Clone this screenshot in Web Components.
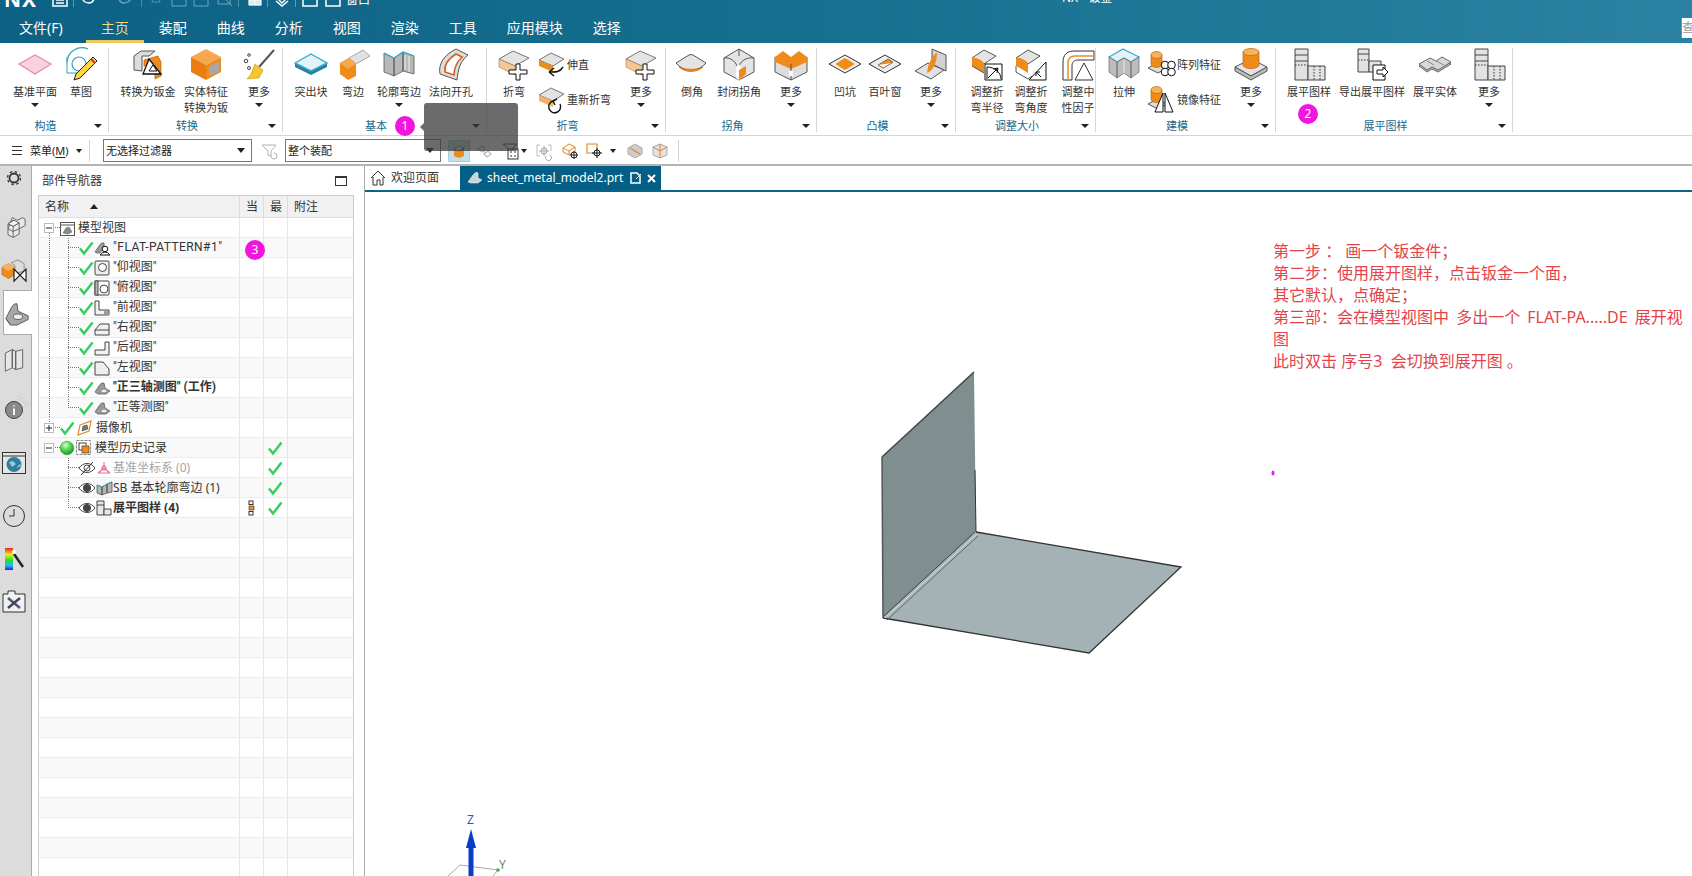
<!DOCTYPE html>
<html lang="zh"><head><meta charset="utf-8"><title>NX - 钣金</title>
<style>
html,body{margin:0;padding:0;background:#fff;overflow:hidden}
body{width:1692px;height:876px;font:12px/16px "Noto Sans","Noto Sans CJK SC",sans-serif;color:#222}
</style></head><body>
<nx-app>
  <nx-titlebar></nx-titlebar>
  <nx-ribbon>
    <rb-group w="108" label="构造">
      <rb-gap w="5"></rb-gap>
      <rb-btn icon="plane" w="60" more>基准平面</rb-btn>
      <rb-btn icon="sketch" w="32">草图</rb-btn>
    </rb-group>
    <rb-group w="173" label="转换">
      <rb-gap w="11"></rb-gap>
      <rb-btn icon="convert" w="56">转换为钣金</rb-btn>
      <rb-btn icon="solid" w="60">实体特征<br>转换为钣</rb-btn>
      <rb-btn icon="broom" w="46" more>更多</rb-btn>
    </rb-group>
    <rb-group w="203" label="基本">
      <rb-gap w="6"></rb-gap>
      <rb-btn icon="tab" w="44">突出块</rb-btn>
      <rb-btn icon="flange" w="40">弯边</rb-btn>
      <rb-btn icon="contour" w="52" more>轮廓弯边</rb-btn>
      <rb-btn icon="cutout" w="52">法向开孔</rb-btn>
    </rb-group>
    <rb-group w="178" label="折弯">
      <rb-gap w="7"></rb-gap>
      <rb-btn icon="bend" w="40">折弯</rb-btn>
      <rb-small w="87">
        <rb-item icon="unbend">伸直</rb-item>
        <rb-item icon="rebend">重新折弯</rb-item>
      </rb-small>
      <rb-btn icon="bend" w="40" more>更多</rb-btn>
    </rb-group>
    <rb-group w="150" label="拐角">
      <rb-gap w="6"></rb-gap>
      <rb-btn icon="chamfer" w="40">倒角</rb-btn>
      <rb-btn icon="closecorner" w="54">封闭拐角</rb-btn>
      <rb-btn icon="morecorner" w="50" more>更多</rb-btn>
    </rb-group>
    <rb-group w="138" label="凸模">
      <rb-gap w="10"></rb-gap>
      <rb-btn icon="dimple" w="36">凹坑</rb-btn>
      <rb-btn icon="louver" w="44">百叶窗</rb-btn>
      <rb-btn icon="gusset" w="48" more>更多</rb-btn>
    </rb-group>
    <rb-group w="139" label="调整大小">
      <rb-gap w="12"></rb-gap>
      <rb-btn icon="radius" w="38">调整折<br>弯半径</rb-btn>
      <rb-btn icon="angle" w="50">调整折<br>弯角度</rb-btn>
      <rb-btn icon="neutral" w="44">调整中<br>性因子</rb-btn>
    </rb-group>
    <rb-group w="179" label="建模">
      <rb-gap w="8"></rb-gap>
      <rb-btn icon="extrude" w="40">拉伸</rb-btn>
      <rb-small w="87">
        <rb-item icon="pattern">阵列特征</rb-item>
        <rb-item icon="mirror">镜像特征</rb-item>
      </rb-small>
      <rb-btn icon="boss" w="40" more>更多</rb-btn>
    </rb-group>
    <rb-group w="236" label="展平图样" last>
      <rb-gap w="4"></rb-gap>
      <rb-btn icon="flat" w="58">展平图样</rb-btn>
      <rb-btn icon="export" w="68">导出展平图样</rb-btn>
      <rb-btn icon="flatsolid" w="58">展平实体</rb-btn>
      <rb-btn icon="flat" w="50" more>更多</rb-btn>
    </rb-group>
  </nx-ribbon>
  <nx-toolbar></nx-toolbar>
  <nx-main>
    <nx-sidebar></nx-sidebar>
    <nx-navigator>
      <nav-row tree="minus" lead="" icon="viewwin" zero>模型视图</nav-row>
      <nav-row guide check icon="isouser"><span style="letter-spacing:.45px">"FLAT-PATTERN#1"</span></nav-row>
      <nav-row guide check icon="vbottom">"仰视图"</nav-row>
      <nav-row guide check icon="vtop">"俯视图"</nav-row>
      <nav-row guide check icon="vfront">"前视图"</nav-row>
      <nav-row guide check icon="vright">"右视图"</nav-row>
      <nav-row guide check icon="vback">"后视图"</nav-row>
      <nav-row guide check icon="vleft">"左视图"</nav-row>
      <nav-row guide check icon="iso" bold>"正三轴测图" (工作)</nav-row>
      <nav-row guide last check icon="iso">"正等测图"</nav-row>
      <nav-row tree="plus" up check icon="camera">摄像机</nav-row>
      <nav-row tree="minus" ball icon="history" best>模型历史记录</nav-row>
      <nav-row sub eyeoff icon="csys" muted best>基准坐标系 (0)</nav-row>
      <nav-row sub eye icon="contourmini" best>SB 基本轮廓弯边 (1)</nav-row>
      <nav-row sub last eye icon="flatmini" bold cur best>展平图样 (4)</nav-row>
    </nx-navigator>
    <nx-viewport>
      <nx-note>第一步 ： 画一个钣金件；<br>第二步：使用展开图样，点击钣金一个面，<br>其它默认，点确定；<br><span style="word-spacing:3px">第三部：会在模型视图中 多出一个 FLAT-PA.....DE 展开视</span><br>图<br>此时双击 序号3&nbsp; 会切换到展开图 。</nx-note>
    </nx-viewport>
  </nx-main>
  <nx-tip style="left:424px;top:103px"></nx-tip>
  <nx-badge style="left:395px;top:116px">1</nx-badge>
  <nx-badge style="left:1298px;top:104px">2</nx-badge>
  <nx-badge style="left:245px;top:240px">3</nx-badge>
</nx-app>
<script>
const S='stroke-linejoin="round"';
const cross=`<path d="M19 16h4v6h7v4h-7v6h-4v-6h-7v-4h7z" fill="#fff" stroke="#111"/>`;
const cyl=(x,y,w=14,h=12)=>`<path d="M${x} ${y}v${h}a${w/2} 3.5 0 0 0 ${w} 0v-${h}z" fill="#f08a18" stroke="#b86a10" stroke-width=".7"/><ellipse cx="${x+w/2}" cy="${y}" rx="${w/2}" ry="3.5" fill="#f9b25a" stroke="#b86a10" stroke-width=".7"/>`;
const I={
plane:`<path d="M1 16 17 7 33 16 17 26Z" fill="#fbd0e0" stroke="#e58ab0" stroke-width="1.2"/>`,
sketch:`<path d="M3 14A15 15 0 0 1 24 1" fill="none" stroke="#2aa3bb" stroke-width="1.3"/><path d="M3 9v16h18" fill="none" stroke="#2aa3bb"/><circle cx="15" cy="16" r="7" fill="none" stroke="#2aa3bb" stroke-width="1.2"/><path d="M29 9 33 13 16 30 10 32 12 26Z" fill="#ffd43c" stroke="#222"/><path d="M27 11 31 15" stroke="#c33" stroke-width="2"/>`,
convert:`<path d="M3 22V8l7-5h14l-6 5h-7v15z" fill="#dcdcdc" stroke="#555"/><path d="M13 12l14-4 3 6v14l-6 3V15l-11 3z" fill="#f28a1e" stroke="#a8600f" stroke-width=".7"/><path d="M18 11 12 26H30Z" fill="#fff" stroke="#111" stroke-width="1.3"/><path d="M22 17 18 23H26Z" fill="#fff" stroke="#111"/>`,
solid:`<path d="M17 1 32 9 17 17 2 9Z" fill="#f7a84c"/><path d="M2 9 17 17V32L2 24Z" fill="#ea7c10"/><path d="M17 17 32 9V24L17 32Z" fill="#f08a18"/><path d="M20 18.500 30 13V23L20 28.500Z" fill="#a8a8a8"/>`,
broom:`<path d="M32 2 17 19" stroke="#555" stroke-width="2"/><path d="M13 16 21 22 17 30 5 31 9 26Z" fill="#f7c52d" stroke="#c99a10" stroke-width=".6"/><circle cx="4" cy="13" r="1.800" fill="none" stroke="#444"/><circle cx="7" cy="7" r="1.300" fill="none" stroke="#444"/><circle cx="7" cy="20" r="1.500" fill="none" stroke="#444"/>`,
tab:`<path d="M1 15 17 7 33 15V19L17 27 1 19Z" fill="#2b7f9f"/><path d="M1 15 17 6 33 15 17 23Z" fill="#e6f2f7" stroke="#2fb0d0" stroke-width="1.400"/>`,
flange:`<path d="M13 10 27 2 34 8 20 16Z" fill="#e2e2e2" stroke="#888" stroke-width=".7"/><path d="M4 15 13 10 20 16V28L12 32 4 26Z" fill="#f08a18"/><path d="M13 10 20 16 12 21 4 15Z" fill="#f7a84c"/>`,
contour:`<path d="M2 5 12 10V28L2 24ZM12 10 21 4V23L12 28ZM21 4 32 8V26L21 23Z" fill="#b8b8b8" stroke="#555" stroke-width=".8"/><path d="M2 5 12 10 21 4 32 8" fill="none" stroke="#2fb0d0" stroke-width="1.300"/><path d="M23 7v15M27 8v16" stroke="#eee"/>`,
cutout:`<path d="M6 26C4 16 10 7 22 1L34 7C26 13 24 22 23 32Z" fill="#ddd" stroke="#555"/><path d="M11 24C10 17 14 11 22 6L28 9C23 14 20 20 20 27Z" fill="#fff" stroke="#d9601a" stroke-width="1.600"/>`,
bend:`<path d="M2 11 16 3 32 10 18 18Z" fill="#e4e4e4" stroke="#777"/><path d="M2 11 18 18V27L2 19Z" fill="#f4c896" stroke="#a57a48" stroke-width=".6"/>${cross}`,
unbend:`<path d="M1 8 13 1 26 7 15 14Z" fill="#e2e2e2" stroke="#777"/><path d="M1 8 15 14V20L1 14Z" fill="#f08a18"/><path d="M11 20c6 0 10 1 14-5M11 20l5-4M11 20l5 4" fill="none" stroke="#111" stroke-width="1.400"/>`,
rebend:`<path d="M1 8 13 1 26 7 15 14Z" fill="#e2e2e2" stroke="#777"/><path d="M1 8 15 14V20L1 14Z" fill="#f4b066"/><path d="M22 17a6 6 0 1 1-7-3M15 14l4-2M15 14l2 4" fill="none" stroke="#111" stroke-width="1.400"/>`,
chamfer:`<path d="M1 15 14 7Q16 6 18 7L31 15Q26 21 16 23 6 21 1 15Z" fill="#e4e4e4" stroke="#555"/><path d="M4 19C10 25 22 25 28 19 22 22 10 22 4 19Z" fill="#f08a18" stroke="#c46a10" stroke-width=".6"/>`,
closecorner:`<path d="M2 10 17 1 32 10V24L17 32 2 24Z" fill="#e4e4e4" stroke="#555"/><path d="M2 10C8 9 13 13 15 18M32 10C26 9 19 12 17 18M17 1V8" fill="none" stroke="#555"/><path d="M14 19 17 16 19 20V31L17 32 14 30Z" fill="#fff"/><path d="M17 22 24 18V26L17 32Z" fill="#f08a18"/>`,
morecorner:`<path d="M1 9 17 17 33 9V24L17 32 1 24Z" fill="#ddd" stroke="#555"/><path d="M1 9 9 3 17 9 25 3 33 9V14L17 21 1 14Z" fill="#f08a18"/><path d="M17 16v16" stroke="#555"/><path d="M15 23h4v5h-4z" fill="#fff"/>`,
dimple:`<path d="M1 16 17 7 33 16 17 25Z" fill="#eee" stroke="#333"/><path d="M9 16 17 11 25 16 17 21Z" fill="#f08a18" stroke="#f08a18" stroke-width="2" ${S}/>`,
louver:`<path d="M1 16 17 7 33 16 17 25Z" fill="#eee" stroke="#333"/><path d="M10 17 20 11 25 14 15 20Z" fill="#f08a18" stroke="#555" stroke-width=".7"/><path d="M10 17 15 20 24 15" fill="#fff" stroke="#555" stroke-width=".7"/>`,
gusset:`<path d="M1 23 14 15 30 22 17 31Z" fill="#e2e2e2" stroke="#555"/><path d="M18 1 32 7V23L18 16Z" fill="#d2d2d2" stroke="#555"/><path d="M13 25C14 16 18 7 23 5 23 14 19 23 13 25Z" fill="#f08a18"/>`,
radius:`<path d="M2 10 14 2 26 8 14 16Z" fill="#e4e4e4" stroke="#555"/><path d="M2 10C2 8 14 12 14 16V25L2 18Z" fill="#f08a18"/><path d="M2 18 14 25" stroke="#555"/><path d="M15 16H32V32H15Z" fill="#fff" stroke="#111"/><path d="M17 31V19C25 19 31 25 31 31" fill="none" stroke="#111"/><path d="M18 30 28 20M28 20l-5 1M28 20l-1 5" stroke="#111"/>`,
angle:`<path d="M2 10 14 2 26 8 14 16Z" fill="#e4e4e4" stroke="#555"/><path d="M2 10C2 8 14 12 14 16V25L2 18Z" fill="#f08a18"/><path d="M2 18V24L14 31 18 28" fill="#fff" stroke="#555"/><path d="M32 14V32H15Z" fill="#fff" stroke="#111"/><path d="M22 24 27 29M22 24l4 0M22 24l0 4" stroke="#111"/>`,
neutral:`<path d="M2 32V14C2 7 6 3 13 3H33V12H17C13 12 11 14 11 18V32Z" fill="#fff" stroke="#333"/><path d="M7 32V15C7 10 10 8 14 8H33" fill="none" stroke="#e8902c" stroke-width="1.500"/><path d="M23 15 14 32H32Z" fill="#fff" stroke="#333"/>`,
extrude:`<path d="M2 9 16 1 32 9 24 14 17 10 10 14Z" fill="#e6f2f7" stroke="#2fb0d0" stroke-width="1.300"/><path d="M2 9 10 14V30L2 24ZM24 14 32 9V24L24 30ZM10 14 17 10 24 14V30L17 25 10 30Z" fill="#bdbdbd" stroke="#666" stroke-width=".7"/><path d="M17 12V25" stroke="#eee"/>`,
pattern:`<path d="M0 16 9 11 19 16 10 21Z" fill="#ddd" stroke="#555"/>${cyl(3,3,11,9)}<g fill="#fff" stroke="#111"><circle cx="17" cy="13" r="3.800"/><circle cx="23.500" cy="13" r="3.800"/><circle cx="17" cy="20" r="3.800"/><circle cx="23.500" cy="20" r="3.800"/></g>`,
mirror:`<path d="M0 17 9 12 19 17 10 22Z" fill="#ddd" stroke="#555"/>${cyl(3,3,11,9)}<path d="M15 6V25H7ZM17 6V25H25Z" fill="#fff" stroke="#111"/>`,
boss:`<path d="M1 19 17 11 33 19 17 28Z" fill="#e4e4e4" stroke="#555"/><path d="M1 19V23L17 32 33 23V19L17 28Z" fill="#bbb" stroke="#555"/>${cyl(9,4,16,13)}`,
flat:`<g fill="#e2e2e2" stroke="#444"><path d="M3 1H16V32H3Z"/><path d="M16 18H33V32H16Z"/></g><path d="M3 7H16M3 13H16" stroke="#444"/><path d="M3 17H16M22 18V32M28 18V32" stroke="#333" stroke-dasharray="1.500 1.500"/>`,
export:`<g fill="#e2e2e2" stroke="#444"><path d="M3 1H14V24H3Z"/><path d="M14 13H26V24H14Z"/></g><path d="M3 6H14" stroke="#444"/><path d="M3 12H14" stroke="#333" stroke-dasharray="1.500 1.500"/><path d="M18 17H30V32H18Z" fill="#fff" stroke="#111"/><path d="M22 22h6v-3l5 5-5 5v-3h-6z" fill="#fff" stroke="#111"/>`,
flatsolid:`<path d="M1 18 12 12 18 15 24 11 33 16 20 24 14 21 9 24Z" fill="#bbb" stroke="#666"/><path d="M1 16 12 10 18 13 24 9 33 14 20 22 14 19 9 22Z" fill="#d8d8d8" stroke="#666"/><path d="M9 13 16 17M18 13 26 17" stroke="#888"/>`
};
const N={
viewwin:`<rect x=".5" y="2.500" width="14" height="13" fill="#fff" stroke="#555"/><path d="M1 5H14" stroke="#555"/><path d="M3 13 6 8 9 7 12 12 8 14Z" fill="#888" stroke="#555" stroke-width=".5"/>`,
iso:`<path d="M1 12 5 6Q7 2 10 3L11 8 16 11 12 14H4Z" fill="#999" stroke="#555" stroke-width=".7"/><ellipse cx="10" cy="11" rx="2.500" ry="1.200" fill="#eee"/>`,
isouser:`<path d="M1 12 5 6Q7 2 10 3L10 8 6 13H3Z" fill="#999" stroke="#555" stroke-width=".7"/><circle cx="11" cy="9" r="2.800" fill="#fff" stroke="#111"/><path d="M6 15Q11 9 16 15Z" fill="#fff" stroke="#111"/>`,
vbottom:`<rect x="1" y="1" width="14" height="14" rx="1" fill="#eee" stroke="#444"/><circle cx="8.500" cy="7.500" r="4" fill="#fff" stroke="#444"/>`,
vtop:`<rect x="1" y="1" width="14" height="14" rx="1" fill="#fff" stroke="#444"/><rect x="1" y="1" width="3" height="14" fill="#bbb" stroke="#444"/><circle cx="10" cy="9" r="4" fill="#fff" stroke="#444"/>`,
vfront:`<path d="M1 1H5V10H15V15H1Z" fill="#f2f2f2" stroke="#444"/><path d="M10 11H15V15H10Z" fill="#999"/>`,
vright:`<path d="M1 15V10L6 4H15V15Z" fill="#f2f2f2" stroke="#444"/><path d="M1 10H15" stroke="#444"/>`,
vback:`<path d="M1 15V10H11V2H15V15Z" fill="#f2f2f2" stroke="#444"/>`,
vleft:`<path d="M1 2H9L15 9V15H1Z" fill="#eee" stroke="#444"/>`,
camera:`<path d="M3 5 14 1 12 11 1 15Z" fill="#fff" stroke="#e08a2c" stroke-width="1.200"/><path d="M5 11 6 6 10 5 11 9Z" fill="#777" stroke="#444" stroke-width=".6"/>`,
history:`<rect x=".5" y=".5" width="14" height="14" fill="#fff" stroke="#888" stroke-dasharray="3 1"/><rect x="3" y="3" width="7" height="7" fill="none" stroke="#444"/><rect x="6" y="6" width="7" height="7" fill="#f08a18" stroke="#444" stroke-width=".7"/>`,
csys:`<g fill="none" stroke="#e0708c" stroke-width="1.100"><path d="M8 8V2M8 8 2 13M8 8 14 13M2 13H14"/><circle cx="8" cy="8" r="2"/></g>`,
contourmini:`<path d="M1 5 6 7V15L1 13ZM6 7 11 4V13L6 15ZM11 4 16 2V12L11 13Z" fill="#b5b5b5" stroke="#444" stroke-width=".7"/><path d="M1 5 6 7 11 4 16 2" fill="none" stroke="#3a9db8"/>`,
flatmini:`<g fill="#e8e8e8" stroke="#444"><path d="M1 1H8V15H1Z"/><path d="M8 9H15V15H8Z"/></g><path d="M1 5H8" stroke="#444"/>`
};
const ns=(b,vw,vh,w,h)=>`<svg xmlns="http://www.w3.org/2000/svg" viewBox="0 0 ${vw} ${vh}" width="${w}" height="${h}" style="display:block;overflow:visible">${b}</svg>`;
const chk=()=>ns(`<path d="M1 7.500 5 12.500 13.500 1.500" fill="none" stroke="#35cf5e" stroke-width="2.500"/>`,15,14,15,14);
const def=(n,c)=>customElements.define(n,c);
const mk=(el,html)=>{el.attachShadow({mode:'open'}).innerHTML=html};
const FONT=`font-family:"Noto Sans","Noto Sans CJK SC",sans-serif`;

def('nx-app',class extends HTMLElement{constructor(){super();mk(this,`<style>:host{display:flex;flex-direction:column;width:1692px;height:876px;position:relative;overflow:hidden;${FONT};font-size:12px}</style><slot></slot>`)}});

def('nx-titlebar',class extends HTMLElement{constructor(){super();
const w='#fff',f='#6fa5bb';
const s=(b,m,wd=16)=>`<span style="margin-left:${m}px;flex:none">${ns(b,16,16,wd,16)}</span>`;
mk(this,`<style>
:host{display:block;height:43px;background:linear-gradient(90deg,#0c6185,#17708f 50%,#2b82a2);color:#fff}
.q{height:14px;display:grid;grid-template-columns:1062px 1fr;overflow:hidden}
.l,.t{display:flex;align-items:flex-end;height:14px;overflow:visible}
.l>span{margin-bottom:7px}
.nx{font:700 21px/16px "Noto Sans",sans-serif;letter-spacing:1px;margin-left:4px;margin-bottom:7px!important;flex:none;width:33px}
.sep{width:1px;height:16px;background:#5d9ab3;margin-left:5px}
.t span{font-size:12px;line-height:14px;margin-bottom:9px;white-space:nowrap}
.w{font-size:12px;line-height:16px;margin-left:5px;margin-bottom:6px!important}
nav{display:flex;height:29px;padding-left:4px;align-items:stretch;font-size:14px}
a{display:block;padding:0 15px;line-height:28px;flex:none;color:#fff}
a.f{margin-right:8px}
a.on{color:#f6d77a;border-bottom:3px solid #f0c860;height:26px;line-height:28px}
.box{margin-left:auto;margin-top:4px;width:11px;height:20px;background:#fff;color:#999;overflow:hidden;font-size:12px;line-height:20px;border-left:1px solid #888;box-sizing:border-box}
</style>
<div class="q"><div class="l"><span class="nx">NX</span>
${s(`<path d="M1 0H15V15H1ZM4 9H12M4 12H12" fill="none" stroke="${w}" stroke-width="1.500"/>`,15)}
<span class="sep"></span>
${s(`<path d="M2 6C3 13 12 14 14 8" fill="none" stroke="${w}" stroke-width="1.500"/>`,6)}
${s(`<path d="M14 6C13 13 4 14 2 8" fill="none" stroke="${f}" stroke-width="1.500"/>`,21)}
<span class="sep" style="background:#4c8ca7;margin-left:8px"></span>
${s(`<path d="M3 4V12H13V4" fill="none" stroke="${f}"/>`,8,12)}
${s(`<path d="M1 0H15V15H1Z" fill="none" stroke="${f}"/>`,9)}
${s(`<path d="M1 0H15V15H1ZM8 6H15" fill="none" stroke="${f}"/>`,6)}
${s(`<path d="M1 0H13V13H1ZM7 7 15 15" fill="none" stroke="${f}"/>`,8)}
<span class="sep" style="background:#4c8ca7"></span>
${s(`<path d="M1 4H15V15H1ZM8 4V15M1 9H15" fill="#dfeaf0" stroke="${w}"/>`,9,14)}
<span class="sep"></span>
${s(`<path d="M2 6 9 2 14 6 8 12ZM2 10 8 15 14 10" fill="none" stroke="${w}" stroke-width="1.500"/>`,6)}
<span class="sep"></span>
${s(`<path d="M1 0H15V15H1ZM1 8H15" fill="none" stroke="${w}" stroke-width="1.500"/>`,6)}
${s(`<path d="M1 0H15V15H1Z" fill="none" stroke="${w}" stroke-width="1.500"/>`,7)}
<span class="w">窗口</span></div>
<div class="t"><span>NX - 钣金</span></div></div>
<nav><a class="f">文件(F)</a><a class="on">主页</a><a>装配</a><a>曲线</a><a>分析</a><a>视图</a><a>渲染</a><a>工具</a><a>应用模块</a><a>选择</a><div class="box">查</div></nav>`)}});

def('nx-ribbon',class extends HTMLElement{constructor(){super();mk(this,`<style>:host{display:flex;height:93px;box-sizing:border-box;border-bottom:1px solid #d4d4d4;background:#fff;padding-bottom:3px}</style><slot></slot>`)}});

def('rb-group',class extends HTMLElement{constructor(){super();
const w=+this.getAttribute('w');
mk(this,`<style>
:host{display:flex;flex-direction:column;flex:none;box-sizing:content-box;width:${w}px;height:84px;margin-top:5px;border-right:1px solid #d6d6d6}
.c{display:flex;height:70px}
.f{display:flex;height:14px;line-height:16px;padding-top:1px;color:#17688c;font-size:11px}
.f b{flex:1;text-align:center;font-weight:400}
.f i{width:14px;margin-right:3px;display:flex;align-items:center;justify-content:center}
.f i::after{content:"";border:4px solid transparent;border-top:4px solid #222;border-bottom:0;margin-top:1px}
</style><div class="c"><slot></slot></div><div class="f"><b>${this.getAttribute('label')}</b><i></i></div>`)}});

def('rb-gap',class extends HTMLElement{constructor(){super();mk(this,`<style>:host{display:block;flex:none;width:${this.getAttribute('w')}px}</style>`)}});

def('rb-btn',class extends HTMLElement{constructor(){super();
mk(this,`<style>
:host{display:flex;flex-direction:column;align-items:center;flex:none;width:${this.getAttribute('w')}px;color:#333}
.i{height:32px;display:block}
.l{margin-top:4px;font-size:11px;line-height:16px;text-align:center;white-space:nowrap;width:100%;display:flex;justify-content:center}
.l div{flex:none}
.m{width:0;height:0;border:4px solid transparent;border-top:4px solid #222;border-bottom:0;margin-top:3px}
</style><div class="i">${ns(I[this.getAttribute('icon')],34,32,34,32)}</div><div class="l"><div><slot></slot></div></div>${this.hasAttribute('more')?'<div class="m"></div>':''}`)}});

def('rb-small',class extends HTMLElement{constructor(){super();mk(this,`<style>:host{display:flex;flex-direction:column;flex:none;width:${this.getAttribute('w')}px;box-sizing:border-box;padding-left:4px;margin-top:-1px}</style><slot></slot>`)}});

def('rb-item',class extends HTMLElement{constructor(){super();
mk(this,`<style>:host{display:flex;align-items:center;height:35px;gap:3px;color:#333;white-space:nowrap;font-size:11px}</style>${ns(I[this.getAttribute('icon')],26,25,26,25)}<slot></slot>`)}});

def('nx-select',class extends HTMLElement{constructor(){super();
mk(this,`<style>:host{display:flex;align-items:center;justify-content:space-between;flex:none;box-sizing:border-box;height:23px;width:${this.getAttribute('w')}px;margin-left:${this.getAttribute('ml')}px;border:1px solid #777;padding:0 6px 0 2px;background:#fff;color:#222;white-space:nowrap;font-size:11px}i{border:4px solid transparent;border-top:5px solid #222;border-bottom:0}</style><slot></slot><i></i>`)}});

def('nx-toolbar',class extends HTMLElement{constructor(){super();
const t=(b,ml,op=1)=>`<span style="flex:none;margin-left:${ml}px;opacity:${op};display:block">${ns(b,16,16,16,16)}</span>`;
const car=ml=>`<i class="c" style="margin-left:${ml}px"></i>`;
mk(this,`<style>
:host{display:flex;align-items:center;height:30px;box-sizing:border-box;border-bottom:2px solid #b4b4b4;background:#fff;padding-top:1px;color:#222;white-space:nowrap;font-size:11px}
.c{flex:none;border:3.500px solid transparent;border-top:4px solid #222;border-bottom:0}
.sep{flex:none;width:1px;height:22px;background:#d4d4d4}
.hl{flex:none;width:22px;height:22px;margin-left:7px;background:#c2e0ea;border:1px solid #a9cfdc;box-sizing:border-box;display:flex;align-items:center;justify-content:center}
u{text-underline-offset:2px}
</style>
<span style="flex:none;margin-left:12px;width:10px;height:9px;border-top:1px solid #333;border-bottom:1px solid #333;box-sizing:border-box;background:linear-gradient(#333,#333) center/100% 1px no-repeat"></span>
<span style="flex:none;margin-left:8px;width:42px">菜单(<u>M</u>)</span>${car(4)}
<span class="sep" style="margin-left:7px"></span>
<nx-select w="149" ml="13">无选择过滤器</nx-select>
${t(`<path d="M1 2H15L10 8V13L7 12V8Z" fill="#fff" stroke="#aaa"/><path d="M10 13a3 3 0 1 0 3-3" fill="none" stroke="#aaa"/>`,9,.9)}
<nx-select w="156" ml="8">整个装配</nx-select>
<div class="hl">${ns(`<path d="M3 6 8 3 13 5V13L8 15 3 13Z" fill="#f08a18"/><path d="M3 6 8 3 13 5 8 8Z" fill="#eee" stroke="#666" stroke-width=".7"/><path d="M8 8 13 5" stroke="#666"/>`,16,16,16,16)}</div>
${t(`<g fill="none" stroke="#bbb" stroke-width="1.300"><path d="M2 6 6 3 9 6 6 9ZM8 11 12 8 15 11 11 14Z"/><path d="M7 8 10 10"/></g>`,6)}
${t(`<path d="M1 1H15L10 6V14H7V6Z" fill="#fff" stroke="#444"/><rect x="6" y="6" width="10" height="10" fill="#fff" stroke="#333"/><path d="M8 9h2M12 9h2M8 13h2M12 13h2" stroke="#333"/>`,10)}${car(3)}
${t(`<path d="M1 2H4M1 2V13H4M12 2H15V8" fill="none" stroke="#bbb"/><circle cx="8" cy="8" r="3" fill="none" stroke="#999"/><path d="M8 3V13M3 8H13M10 13a3 3 0 1 0 4-1" fill="none" stroke="#aaa"/>`,9)}
${t(`<path d="M1 5 7 1 13 4V9L7 12 1 9ZM1 5 7 8 13 4M7 8V12" fill="none" stroke="#e0852a"/><circle cx="12" cy="12" r="3" fill="#fff" stroke="#222"/><path d="M12 8V16M8 12H16" stroke="#222"/>`,10)}
${t(`<path d="M1 1H11V10H1Z" fill="#fff" stroke="#e0852a" stroke-width="1.200"/><circle cx="11" cy="10" r="3" fill="#fff" stroke="#111"/><path d="M11 5V15M6 10H16" stroke="#111"/>`,8)}${car(8)}
${t(`<path d="M1 5 8 1 15 5V11L8 15 1 11Z" fill="#ccc" stroke="#aaa"/><path d="M3 5 13 11" stroke="#e0852a" stroke-width="1.300"/>`,11)}
${t(`<path d="M1 4 8 1 15 4V12L8 15 1 12Z" fill="#e2e2e2" stroke="#aaa"/><path d="M8 1V15M1 4 8 8 15 4" fill="none" stroke="#e0852a"/>`,9)}
<span class="sep" style="margin-left:10px"></span>`)}});

def('nx-main',class extends HTMLElement{constructor(){super();mk(this,`<style>:host{display:flex;flex:1;min-height:0}</style><slot></slot>`)}});

def('nx-sidebar',class extends HTMLElement{constructor(){super();
const it=(h,b,s='',w=24,hh=24,vw=24,vh=24,pt=0)=>`<div class="it ${s}" style="height:${h}px;padding-top:${pt}px">${ns(b,vw,vh,w,hh)}</div>`;
mk(this,`<style>
:host{display:flex;flex-direction:column;flex:none;width:32px;box-sizing:border-box;background:#dcdcdc;border-right:1px solid #aaa;height:100%}
.it{display:flex;align-items:center;justify-content:center;flex:none;box-sizing:border-box;padding-right:3px}
.on{background:#fff;border:1px solid #aaa;border-right:0;margin:0 -1px 0 3px;padding:0 2px 0 0}
</style>
${it(24,`<circle cx="12" cy="12" r="4.500" fill="none" stroke="#333" stroke-width="1.800"/><circle cx="12" cy="12" r="6.500" fill="none" stroke="#333" stroke-width="1.300" stroke-dasharray="2.500 2.600"/>`)}
${it(53,`<path d="M12 1 18 4 24 1 27 3V10L20 14V20L13 24 7 21V14Z" fill="#e8e8e8" stroke="#555"/><path d="M7 8 13 11 20 7M13 11V24M20 7V14M7 14 13 17 20 14M7 8 13 4 18 7M7 8V14" fill="none" stroke="#555"/><path d="M13 11 20 7 14 4 7 8Z" fill="#f6f6f6" stroke="#555"/>`,'',24,26,28,26,22)}
${it(47,`<path d="M1 9 8 5 15 9V17L8 21 1 17Z" fill="#f08a18" stroke="#a8600f" stroke-width=".6"/><path d="M1 9 8 5 15 9 8 13Z" fill="#f9b25a"/><path d="M11 4 18 1 25 5V13L15 16V7Z" fill="#ddd" stroke="#888"/><path d="M14 24V11L27 24V11Z" fill="#fff" stroke="#111" stroke-width="1.200"/>`,'',28,24,28,26,8)}
${it(45,`<path d="M2 20 8 8Q11 3 14 4L15 12 26 17V21L14 27H7Z" fill="#a8a8a8" stroke="#555"/><ellipse cx="15" cy="18" rx="5" ry="3" fill="#eee" stroke="#555"/><path d="M2 20 7 27" stroke="#555"/>`,'on',26,26,28,28)}
${it(50,`<path d="M3 7 11 3V24L3 28ZM11 3 15 5V26L11 24ZM15 5 23 3V24L15 26Z" fill="#e6e6e6" stroke="#555"/>`,'',24,26,26,30)}
${it(45,`<circle cx="12" cy="14" r="8.500" fill="#8a8a8a" stroke="#444"/><path d="M12 9.500V10.500M12 12.500V19" stroke="#fff" stroke-width="1.800"/><path d="M16 3A12 12 0 0 1 24 11M15 0A15 15 0 0 1 27 11" fill="none" stroke="#ccc"/>`)}
<div style="height:22px;flex:none"></div>
${it(22,`<rect x=".5" y=".5" width="23" height="21" fill="#e6e6e6" stroke="#333"/><path d="M1 4H23" stroke="#333"/><circle cx="12" cy="12.500" r="7.500" fill="#2e7e9e"/><path d="M7 10 11 9 14 12 10 15ZM14 16 18 12 19 14Z" fill="#9dc8d6"/>`,'',24,22,24,22)}
<div style="height:31px;flex:none"></div>
${it(22,`<circle cx="11" cy="11" r="10.500" fill="none" stroke="#333"/><path d="M11 11V4M11 11H6" stroke="#333"/>`,'',22,22,22,22)}
<div style="height:21px;flex:none"></div>
${it(22,`<defs><linearGradient id="rb" x1="0" y1="0" x2="0" y2="1"><stop offset="0" stop-color="#e22"/><stop offset=".3" stop-color="#ee2"/><stop offset=".55" stop-color="#2d3"/><stop offset=".8" stop-color="#2be"/><stop offset="1" stop-color="#22c"/></linearGradient></defs><rect x="3" y="0" width="8" height="22" fill="url(#rb)"/><path d="M12 6 21 19" stroke="#222" stroke-width="2.500"/><circle cx="12" cy="4" r="2" fill="#fff"/>`,'',24,22,24,22)}
<div style="height:20px;flex:none"></div>
${it(22,`<path d="M1 4H6V1H13V4H23V22H1Z" fill="#eef2f2" stroke="#333"/><path d="M6 8 18 18" stroke="#557" stroke-width="2.500"/><path d="M6 18 18 8" stroke="#445" stroke-width="2.500"/>`,'',24,22,24,22)}`)}});

def('nx-navigator',class extends HTMLElement{constructor(){super();
mk(this,`<style>
:host{display:flex;flex-direction:column;flex:none;width:332px;background:#fff;overflow:hidden;color:#333}
.h{height:29px;flex:none;display:flex;align-items:center;padding:1px 17px 0 10px;box-sizing:border-box;justify-content:space-between}
.m{width:12px;height:10px;border:1px solid #333;border-top-width:2px;box-sizing:border-box}
.t{margin-left:6px;width:316px;flex:1;border:1px solid #ccc;border-bottom:0;box-sizing:border-box}
.th{display:grid;grid-template-columns:201px 24px 24px 1fr;height:21px;background:#f1f1f1;border-bottom:1px solid #ddd;line-height:21px}
.th div{padding-left:6px;border-right:1px solid #dcdcdc;display:flex;align-items:center}
.th div:last-child{border:0}
.th i{margin-left:21px;border:4.500px solid transparent;border-bottom:5px solid #222;border-top:0}
</style>
<div class="h"><span>部件导航器</span><span class="m"></span></div>
<div class="t"><div class="th"><div>名称<i></i></div><div>当</div><div>最</div><div>附注</div></div><slot></slot></div>`);
for(let i=0;i<18;i++){this.appendChild(document.createElement('nav-row'))}
[...this.querySelectorAll('nav-row')].forEach((r,i)=>{if(i%2)r.setAttribute('alt','')});
}});

def('nav-row',class extends HTMLElement{
static get observedAttributes(){return['alt']}
attributeChangedCallback(){this.style.background=this.hasAttribute('alt')?'#f9f9f9':'#fff'}
connectedCallback(){if(this.shadowRoot)return;
const A=k=>this.hasAttribute(k),G=k=>this.getAttribute(k);
const dotH='repeating-linear-gradient(90deg,#777 0 1px,transparent 1px 2px)';
const dotV='repeating-linear-gradient(0deg,#777 0 1px,transparent 1px 2px)';
let lead='';
if(A('guide'))lead+=`<span style="flex:none;width:19px;margin-left:10px;align-self:stretch;background:${dotV} left/1px 100% no-repeat"></span>`;
if(A('sub'))lead+=`<span style="flex:none;width:29px"></span>`;
if(A('guide')||A('sub'))lead+=`<span style="flex:none;width:11px;align-self:stretch;background:${dotH} center/100% 1px no-repeat,${dotV} left top/1px ${A('last')?'50%':'100%'} no-repeat"></span>`;
const tr=G('tree');
if(tr){
 const vb=A('zero')?`${dotV} center bottom/1px 50% no-repeat`:A('up')?`${dotV} center top/1px 50% no-repeat`:'none';
 lead+=`<span style="flex:none;width:11px;margin-left:5px;align-self:stretch;display:flex;align-items:center;background:${vb}"><span style="display:block;background:#fff">${ns(`<rect x=".5" y=".5" width="9" height="9" fill="#fff" stroke="#bbb"/><path d="M2 5H8${tr=='plus'?'M5 2V8':''}" stroke="#222"/>`,10,10,10,10)}</span></span><span style="flex:none;width:5px;height:1px;background:${dotH}"></span>`;
}
let ic='';
if(A('check'))ic+=`<span class="s">${chk()}</span>`;
if(A('ball'))ic+=`<span class="s">${ns(`<defs><radialGradient id="b" cx=".4" cy=".3" r=".7"><stop offset="0" stop-color="#d5ffd0"/><stop offset=".5" stop-color="#4fd850"/><stop offset="1" stop-color="#1c9a2c"/></radialGradient></defs><circle cx="7" cy="7" r="6.800" fill="url(#b)" stroke="#2a8a3a" stroke-width=".5"/>`,14,14,14,14)}</span>`;
if(A('eye')||A('eyeoff'))ic+=`<span class="s">${ns(`<path d="M0 7C4 1 12 1 16 7 12 13 4 13 0 7Z" fill="#fff" stroke="#444"/><circle cx="8" cy="7" r="${A('eye')?3.6:3}" fill="${A('eye')?'#444':'none'}" stroke="#444"/>${A('eyeoff')?'<path d="M2 14 14 1" stroke="#333"/>':''}`,16,14,16,14)}</span>`;
const icon=G('icon');
if(icon)ic+=`<span class="s" style="margin-left:${A('zero')?0:A('guide')?0:A('sub')?1:2}px">${ns(N[icon],16,16,16,16)}</span>`;
const tl=A('zero')?2:A('sub')?1:3;
const fam=A('guide')?'font-family:Roboto,"Noto Sans CJK SC",sans-serif;':'';
mk(this,`<style>
:host{display:grid;grid-template-columns:201px 24px 24px 1fr;height:20px;box-sizing:border-box;border-bottom:1px solid #ececec;line-height:19px;color:${A('muted')?'#a5a5a5':'#333'};font-weight:${A('bold')?700:400}}
.n{display:flex;align-items:center;white-space:nowrap;border-right:1px solid #e6e6e6;overflow:hidden}
.c{border-right:1px solid #e6e6e6;display:flex;align-items:center;justify-content:center}
.s{flex:none;display:block}
.tx{margin-left:${tl}px;${fam}}
</style>
<div class="n">${lead}${ic}<span class="tx"><slot></slot></span></div>
<div class="c">${A('cur')?ns(`<g fill="#fff" stroke="#333"><rect x="1" y="1" width="4" height="3.500"/><rect x="1" y="11.500" width="4" height="3.500"/></g><rect x="1" y="6" width="5" height="4" fill="#f08a18" stroke="#333" stroke-width=".6"/>`,7,16,7,16):''}</div>
<div class="c">${A('best')?chk():''}</div><div></div>`);
}});

def('nx-viewport',class extends HTMLElement{constructor(){super();
mk(this,`<style>
:host{display:flex;flex-direction:column;flex:1;min-width:0;border-left:1px solid #aaa;background:#fff;position:relative}
.tabs{display:flex;height:26px;flex:none;box-sizing:border-box;border-bottom:2px solid #0b6487;color:#333}
.w{display:flex;align-items:center;padding-left:5px;width:95px;box-sizing:border-box;gap:5px}
.a{display:flex;align-items:center;width:201px;background:#035f85;color:#fff;padding-left:7px;box-sizing:border-box;font-size:12px;white-space:nowrap}
.c{flex:1;position:relative;overflow:hidden}
svg.m{position:absolute;left:0;top:0}
text{font-family:"Noto Sans",sans-serif;font-size:12px}
</style>
<div class="tabs"><div class="w">${ns(`<path d="M1 8 8 1 15 8M3 7V15H7V10H10V15H13V7" fill="none" stroke="#333"/>`,16,16,16,16)}<span>欢迎页面</span></div>
<div class="a">${ns(`<path d="M1 12 6 5Q9 1 11 3L11 8 15 10 11 13H4Z" fill="#c9d4da" stroke="#fff" stroke-width=".5"/>`,16,16,16,16)}<span style="margin-left:4px">sheet_metal_model2.prt</span><span style="margin-left:7px;flex:none">${ns(`<path d="M1 1H7L10 4V11H1Z" fill="none" stroke="#fff" stroke-width="1.500"/><path d="M6 7 11 2" stroke="#fff"/>`,12,12,12,12)}</span><span style="margin-left:5px;flex:none">${ns(`<path d="M1 1 8 8M8 1 1 8" stroke="#fff" stroke-width="2"/>`,9,9,9,9)}</span></div></div>
<div class="c">
<svg class="m" xmlns="http://www.w3.org/2000/svg" width="1327" height="684" viewBox="365 192 1327 684">
<path d="M882 457 974 372 976 532 883 618Z" fill="#7f8e8e"/>
<path d="M976 532 1181 567 1089 653 883 618Z" fill="#a4b2b6"/>
<path d="M882 457 974 372" stroke="#444" stroke-width="1.500"/><path d="M882 457 883 618" stroke="#555" stroke-width="1.500"/><path d="M975 470 976 532" stroke="#333" stroke-width="1"/>
<path d="M976 532 1181 567 1089 653 883 618" fill="none" stroke="#333" stroke-width="1.300"/>
<path d="M885 618 977 534" stroke="#ddd" stroke-width="1"/><path d="M884 616 975 532" stroke="#444" stroke-width="1"/><path d="M887 620 978 536" stroke="#555" stroke-width=".8"/>
<g fill="none" stroke="#aaa"><path d="M448 876 460 865 498 870 493 876"/></g><circle cx="498" cy="870" r="1.800" fill="#5a9a5a"/>
<path d="M471 829 476 848H473.500V876H468.500V848H466Z" fill="#0b3cc4"/>
<text x="467" y="824" fill="#2a58d8">Z</text><text x="499" y="869" fill="#5a8a5a">Y</text>
<ellipse cx="1273" cy="473" rx="1.500" ry="2.500" fill="#e020e8"/>
</svg><slot></slot></div>`)}});

def('nx-note',class extends HTMLElement{constructor(){super();mk(this,`<style>:host{display:block;position:absolute;left:908px;top:48px;white-space:nowrap;font:16px/22px "Noto Sans","Noto Sans CJK SC",sans-serif;color:#e5434c}</style><slot></slot>`)}});

def('nx-badge',class extends HTMLElement{constructor(){super();mk(this,`<style>:host{position:absolute;width:20px;height:20px;border-radius:50%;background:#f116dd;color:#fff;display:flex;align-items:center;justify-content:center;font:12px/20px "Noto Sans",sans-serif}</style><slot></slot>`)}});

def('nx-tip',class extends HTMLElement{constructor(){super();mk(this,`<style>:host{position:absolute;width:94px;height:48px;border-radius:3px;background:rgba(58,58,58,.75)}:host::before{content:"";position:absolute;left:-4px;top:20px;border:4px solid transparent;border-right:4px solid rgba(58,58,58,.75);border-left:0}</style>`)}});
</script>
</body></html>
